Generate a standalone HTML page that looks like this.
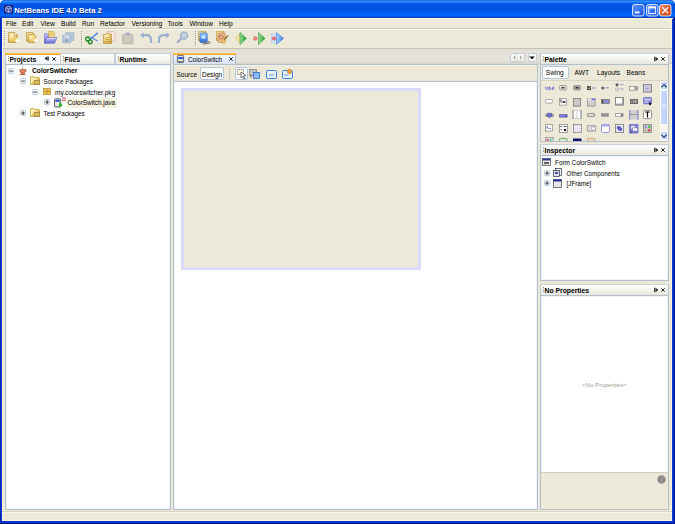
<!DOCTYPE html>
<html><head><meta charset="utf-8">
<style>
*{margin:0;padding:0;box-sizing:border-box}
html,body{width:675px;height:524px;overflow:hidden;background:#ece9d8;font-family:"Liberation Sans",sans-serif;color:#000}
.a{position:absolute}
.t{position:absolute;white-space:nowrap;font-size:6.5px;line-height:8px}
svg.a{overflow:visible}
</style></head><body>
<div class="a" style="left:0px;top:0px;width:675px;height:524px;background:#fff"></div>
<div class="a" style="left:0px;top:0px;width:675px;height:524px;background:#0838d0;border-left:1px solid #0a2ab0;border-right:1px solid #00138c;border-bottom:1px solid #00138c;border-radius:5px 5px 0 0"></div>
<div class="a" style="left:0px;top:0px;width:675px;height:18px;border-radius:5px 5px 0 0;background:linear-gradient(#2466e4 0px,#2a8eff 1.5px,#1a7af8 2.5px,#0457e6 4px,#0052e0 9px,#005cf4 12px,#0066fe 14px,#0062f8 16px,#0a40c4 17.5px,#1a3aa0 18px)"></div>
<svg class="a" style="left:4px;top:5px" width="9" height="8.5" viewBox="0 0 9 8.5"><rect x="0" y="0" width="9" height="8.5" rx="1" fill="#1a2470"/><circle cx="4.5" cy="4.3" r="3.1" fill="#3a48a8" stroke="#c0ccff" stroke-width="0.8"/><path d="M2.3 3 Q4.5 5 6.8 3.2 M4.5 4.3 Q3.8 6 4.8 7.2" stroke="#e0e8ff" stroke-width="0.7" fill="none"/></svg>
<div class="t" style="left:14.2px;top:5.5px;font-size:7.62px;font-weight:bold;color:#fff;line-height:9px;text-shadow:0.7px 0.7px 0 #0a2a8a">NetBeans IDE 4.0 Beta 2</div>
<svg width="0" height="0" style="position:absolute"><defs><linearGradient id="gb" x1="0" y1="0" x2="1" y2="1"><stop offset="0" stop-color="#6b9bff"/><stop offset="0.5" stop-color="#3a74f6"/><stop offset="1" stop-color="#1e4fd6"/></linearGradient><linearGradient id="gr" x1="0" y1="0" x2="1" y2="1"><stop offset="0" stop-color="#f09070"/><stop offset="0.5" stop-color="#e05a30"/><stop offset="1" stop-color="#c23c12"/></linearGradient></defs></svg>
<svg class="a" style="left:632px;top:3.5px" width="12.5" height="12.5" viewBox="0 0 12.5 12.5"><rect x="0.5" y="0.5" width="11.5" height="11.5" rx="2" fill="url(#gb)" stroke="#e8eeff" stroke-width="0.9"/><rect x="3" y="7.5" width="4.5" height="1.8" fill="#fff"/></svg>
<svg class="a" style="left:646px;top:3.5px" width="12.5" height="12.5" viewBox="0 0 12.5 12.5"><rect x="0.5" y="0.5" width="11.5" height="11.5" rx="2" fill="url(#gb)" stroke="#e8eeff" stroke-width="0.9"/><rect x="2.8" y="2.8" width="6.8" height="6.8" fill="none" stroke="#fff" stroke-width="0.9"/><rect x="2.8" y="2.8" width="6.8" height="1.6" fill="#fff"/></svg>
<svg class="a" style="left:659px;top:3.5px" width="12.5" height="12.5" viewBox="0 0 12.5 12.5"><rect x="0.5" y="0.5" width="11.5" height="11.5" rx="2" fill="url(#gr)" stroke="#e8eeff" stroke-width="0.9"/><path d="M3.3 3.3 L9.2 9.2 M9.2 3.3 L3.3 9.2" stroke="#fff" stroke-width="1.3"/></svg>
<div class="a" style="left:2px;top:18px;width:670px;height:503px;background:#ece9d8;border-left:1px solid #fbf6e4;border-right:1px solid #fbf3d8;border-bottom:1px solid #fdf6d9"></div>
<div class="a" style="left:2px;top:18px;width:671px;height:1px;background:#fdf6d9"></div>
<div class="t" style="left:6px;top:19.7px;font-size:6.6px;color:#000;line-height:8px;">File</div>
<div class="t" style="left:22px;top:19.7px;font-size:6.6px;color:#000;line-height:8px;">Edit</div>
<div class="t" style="left:40.5px;top:19.7px;font-size:6.6px;color:#000;line-height:8px;">View</div>
<div class="t" style="left:61px;top:19.7px;font-size:6.6px;color:#000;line-height:8px;">Build</div>
<div class="t" style="left:82px;top:19.7px;font-size:6.6px;color:#000;line-height:8px;">Run</div>
<div class="t" style="left:100px;top:19.7px;font-size:6.6px;color:#000;line-height:8px;">Refactor</div>
<div class="t" style="left:131.5px;top:19.7px;font-size:6.6px;color:#000;line-height:8px;">Versioning</div>
<div class="t" style="left:167.5px;top:19.7px;font-size:6.6px;color:#000;line-height:8px;">Tools</div>
<div class="t" style="left:189.5px;top:19.7px;font-size:6.6px;color:#000;line-height:8px;">Window</div>
<div class="t" style="left:219px;top:19.7px;font-size:6.6px;color:#000;line-height:8px;">Help</div>
<div class="a" style="left:3px;top:28px;width:669px;height:1px;background:#d3cfbd"></div>
<div class="a" style="left:3px;top:29px;width:669px;height:1px;background:#faf9f3"></div>
<div class="a" style="left:4px;top:31px;width:1px;height:16px;background:repeating-linear-gradient(#a29f90 0 1px,transparent 1px 2px)"></div>
<div class="a" style="left:5px;top:32px;width:1px;height:15px;background:repeating-linear-gradient(#fbfaf2 0 1px,transparent 1px 2px)"></div>
<svg width="0" height="0" style="position:absolute"><defs><radialGradient id="gold" cx="0.35" cy="0.3" r="0.85"><stop offset="0" stop-color="#fff6c8"/><stop offset="0.55" stop-color="#eccd70"/><stop offset="1" stop-color="#c4962c"/></radialGradient><linearGradient id="purp" x1="0" y1="0" x2="0" y2="1"><stop offset="0" stop-color="#c8c8ff"/><stop offset="1" stop-color="#6a6ad8"/></linearGradient><linearGradient id="blu" x1="0" y1="0" x2="0" y2="1"><stop offset="0" stop-color="#8ec4ff"/><stop offset="1" stop-color="#2a70d8"/></linearGradient><linearGradient id="grn" x1="0" y1="0" x2="1" y2="0"><stop offset="0" stop-color="#9ee09a"/><stop offset="1" stop-color="#1e9a2a"/></linearGradient><linearGradient id="blt" x1="0" y1="0" x2="1" y2="0"><stop offset="0" stop-color="#a8d0ff"/><stop offset="1" stop-color="#3a80e0"/></linearGradient></defs></svg>
<svg class="a" style="left:8px;top:32px" width="13" height="13" viewBox="0 0 13 13"><path d="M0.5 0.5 h6 l3 3 v7 h-9z" fill="url(#gold)" stroke="#b08a30" stroke-width="0.6"/><path d="M6.5 0.5 v3 h3" fill="#d8b050" stroke="#b08a30" stroke-width="0.5"/><circle cx="7.3" cy="2.4" r="0.8" fill="#fff"/><circle cx="9.3" cy="8.6" r="2.2" fill="#fffbe0" opacity="0.6"/><path d="M9.3 5.3999999999999995 Q9.876000000000001 8.024 12.5 8.6 Q9.876000000000001 9.176 9.3 11.8 Q8.724 9.176 6.1000000000000005 8.6 Q8.724 8.024 9.3 5.3999999999999995Z" fill="#fffdf0" stroke="#f0dc90" stroke-width="0.3"/></svg>
<svg class="a" style="left:26px;top:32px" width="12" height="12" viewBox="0 0 12 12"><path d="M0.5 0.5 h6 l1.5 1.5 v7 h-7.5z" fill="url(#gold)" stroke="#b08a30" stroke-width="0.6"/><path d="M2.5 2.5 h5.5 l2 2 v6 h-7.5z" fill="url(#gold)" stroke="#b08a30" stroke-width="0.6"/><circle cx="9.8" cy="8.6" r="2" fill="#fffbe0" opacity="0.6"/><path d="M9.8 5.6 Q10.34 8.059999999999999 12.8 8.6 Q10.34 9.14 9.8 11.6 Q9.260000000000002 9.14 6.800000000000001 8.6 Q9.260000000000002 8.059999999999999 9.8 5.6Z" fill="#fffdf0" stroke="#f0dc90" stroke-width="0.3"/></svg>
<svg class="a" style="left:44px;top:31px" width="14" height="13" viewBox="0 0 14 13"><path d="M4.5 0.5 h4.5 l1.5 1.5 v6 h-6z" fill="#f4dc80" stroke="#b89030" stroke-width="0.5"/><path d="M5.5 2.5 h3.5 M5.5 4 h3.5" stroke="#c8a040" stroke-width="0.5"/><path d="M0.5 2.5 h2.5 l1 1 v8.5 h-3.5z" fill="url(#purp)" stroke="#5050b8" stroke-width="0.5"/><path d="M2.5 6.5 h10.5 l-2.5 5.8 h-10z" fill="url(#purp)" stroke="#5050b8" stroke-width="0.5"/><path d="M3.5 7.5 h8" stroke="#e8e8ff" stroke-width="0.6"/></svg>
<svg class="a" style="left:62px;top:32px" width="13" height="11.5" viewBox="0 0 13 11.5"><path d="M3.5 0.5 h8.5 v8 h-8.5z" fill="#b4c4d8" stroke="#a0b2c8" stroke-width="0.5"/><path d="M0.5 3 h8.5 v8 h-8.5z" fill="#b4c4d8" stroke="#a0b2c8" stroke-width="0.5"/><rect x="2.3" y="3.2" width="5" height="3" fill="#d4dee8"/><rect x="3" y="7.5" width="3.5" height="3" fill="#98aac0"/><path d="M9.5 1.5 v2 M10.8 1.5 v2" stroke="#d4dee8" stroke-width="0.5"/></svg>
<div class="a" style="left:81px;top:31px;width:1px;height:16px;background:repeating-linear-gradient(#a29f90 0 1px,transparent 1px 2px)"></div>
<div class="a" style="left:82px;top:32px;width:1px;height:15px;background:repeating-linear-gradient(#fbfaf2 0 1px,transparent 1px 2px)"></div>
<svg class="a" style="left:84.5px;top:31.5px" width="13.5" height="12" viewBox="0 0 13.5 12"><path d="M5.5 7 L12.8 0.8" stroke="#5a8ae0" stroke-width="1.6"/><path d="M5.5 5 L12.5 9" stroke="#5a8ae0" stroke-width="1.3"/><circle cx="2.7" cy="7" r="2" fill="none" stroke="#1e8a2a" stroke-width="1.4"/><circle cx="5.2" cy="9.8" r="1.9" fill="none" stroke="#1e8a2a" stroke-width="1.4"/></svg>
<svg class="a" style="left:103px;top:31px" width="12.5" height="13" viewBox="0 0 12.5 13"><path d="M4.5 0.5 h5.5 l2 2 v7.5 h-7.5z" fill="#fbe8e0" stroke="#d8a090" stroke-width="0.5"/><path d="M6 2 h3" stroke="#d8a090" stroke-width="0.4"/><path d="M0.5 3.5 h2.5 l0.8 -1.2 h2 l0.8 1.2 h1.9 v9 h-8z" fill="url(#gold)" stroke="#a07820" stroke-width="0.5"/><path d="M2 6.5 h5 M2 8.5 h5 M2 10.5 h5" stroke="#b08828" stroke-width="0.6"/></svg>
<svg class="a" style="left:122px;top:31.5px" width="11.5" height="12.5" viewBox="0 0 11.5 12.5"><path d="M0.5 2.5 h3 l0.8 -1.5 h3 l0.8 1.5 h3 v9.5 h-10.6z" fill="#c8c6bc" stroke="#b0aea4" stroke-width="0.5"/><path d="M3.5 0.8 h4.5 v2 h-4.5z" fill="#a8a8d0"/><path d="M2.5 6 h6.5 M2.5 8 h6.5" stroke="#dad8d0" stroke-width="0.5"/></svg>
<svg class="a" style="left:140px;top:32px" width="12" height="11.5" viewBox="0 0 12 11.5"><path d="M1 3.2 H6.5 C10.5 3.2 11 6 11 8 V11" stroke="#9cb0d0" stroke-width="2.2" fill="none"/><path d="M0.2 3.2 L3.8 0.2 V6.2z" fill="#9cb0d0"/></svg>
<svg class="a" style="left:157.5px;top:32px" width="12" height="11.5" viewBox="0 0 12 11.5"><path d="M11 3.2 H5.5 C1.5 3.2 1 6 1 8 V11" stroke="#9cb0d0" stroke-width="2.2" fill="none"/><path d="M11.8 3.2 L8.2 0.2 V6.2z" fill="#9cb0d0"/></svg>
<svg class="a" style="left:176px;top:31px" width="12.5" height="13" viewBox="0 0 12.5 13"><circle cx="8" cy="4.6" r="3.6" fill="#c4cede" stroke="#9cacc8" stroke-width="1.2"/><path d="M5.5 7.3 L1.2 11.8" stroke="#9cacc8" stroke-width="2"/></svg>
<div class="a" style="left:194.5px;top:31px;width:1px;height:16px;background:repeating-linear-gradient(#a29f90 0 1px,transparent 1px 2px)"></div>
<div class="a" style="left:195.5px;top:32px;width:1px;height:15px;background:repeating-linear-gradient(#fbfaf2 0 1px,transparent 1px 2px)"></div>
<svg class="a" style="left:198px;top:31px" width="13" height="13.5" viewBox="0 0 13 13.5"><path d="M0.5 0.5 h7.5 v9 h-7.5z" fill="url(#gold)" stroke="#b08a30" stroke-width="0.5"/><rect x="1.8" y="2" width="7.5" height="9.5" rx="1" fill="url(#blu)" stroke="#2a5ab8" stroke-width="0.5"/><path d="M3.5 4.5 h4 v3 h-4z" fill="#d0e6ff"/><path d="M5.5 11.5 L12 10.5 M6 13 L12.5 12" stroke="#707070" stroke-width="1"/><circle cx="5.5" cy="12" r="1.2" fill="none" stroke="#707070" stroke-width="0.7"/></svg>
<svg class="a" style="left:216px;top:31px" width="12.5" height="13.5" viewBox="0 0 12.5 13.5"><path d="M0.5 0.5 h7.5 v9 h-7.5z" fill="url(#gold)" stroke="#b08a30" stroke-width="0.5"/><rect x="1.8" y="2" width="7.5" height="9.5" rx="1" fill="#eab890" stroke="#b87040" stroke-width="0.5"/><circle cx="5.2" cy="6" r="2" fill="none" stroke="#a86040" stroke-width="0.8"/><path d="M8 9 L12 4.5" stroke="#8a6a2a" stroke-width="1.2"/><path d="M5.5 9.5 l2.5 -1 l1.5 1.5 l-1.5 3 z" fill="#f0d070" stroke="#b08a30" stroke-width="0.4"/></svg>
<svg class="a" style="left:235px;top:31.5px" width="12" height="13" viewBox="0 0 12 13"><path d="M0.3 6.5 L5 1.5 V11.5z" fill="#f4e4a0" stroke="#c8b060" stroke-width="0.4"/><path d="M5 0.5 L11.5 6.5 L5 12.5z" fill="url(#grn)" stroke="#1a8a22" stroke-width="0.5"/></svg>
<svg class="a" style="left:252.5px;top:31.5px" width="12.5" height="13" viewBox="0 0 12.5 13"><circle cx="2.3" cy="6.5" r="1.8" fill="#f07070" stroke="#d04040" stroke-width="0.4"/><path d="M1.5 6.5 h1.6" stroke="#fff" stroke-width="0.5"/><path d="M5.5 0.5 L12 6.5 L5.5 12.5z" fill="url(#grn)" stroke="#1a8a22" stroke-width="0.5"/></svg>
<svg class="a" style="left:270.5px;top:31.5px" width="13" height="13" viewBox="0 0 13 13"><rect x="0.5" y="2" width="5" height="9" fill="#d0e4ff" stroke="#6a9ae0" stroke-width="0.5" stroke-dasharray="1 0.8"/><circle cx="3" cy="6.5" r="1.8" fill="#f07070" stroke="#d04040" stroke-width="0.4"/><path d="M5.5 0.5 L12.5 6.5 L5.5 12.5z" fill="url(#blt)" stroke="#2a6ad0" stroke-width="0.5"/></svg>
<div class="a" style="left:3px;top:48px;width:669px;height:1px;background:#c7c3b2"></div>
<div class="a" style="left:3px;top:49px;width:669px;height:15px;background:linear-gradient(#dedcd2 0px,#e3e1da 1.5px,#e4e2da 12px,#d8d7ce 14px,#d8d7ce 15px)"></div>
<div class="a" style="left:5px;top:53px;width:56px;height:11px;border-left:1px solid #c4ccd6;border-right:1px solid #c4ccd6;background:linear-gradient(#ffffff,#fafbfd 50%,#eef2f8)"></div><div class="a" style="left:5px;top:53px;width:56px;height:2px;background:linear-gradient(#ffcf55,#f39b1d);border-radius:1px 1px 0 0"></div>
<div class="a" style="left:7.5px;top:56px;width:1px;height:6px;background:repeating-linear-gradient(#8a8a8a 0 1px,transparent 1px 2px)"></div>
<div class="t" style="left:9.5px;top:55.7px;font-size:6.8px;font-weight:bold;color:#000;">Projects</div>
<svg class="a" style="left:44px;top:56px" width="5" height="5" viewBox="0 0 5 5"><path d="M4.3 0.5 V4.5" stroke="#404040" stroke-width="1.1"/><path d="M3.5 0.3 L0.5 2.5 L3.5 4.7 Z" fill="#1a1a1a"/></svg>
<svg class="a" style="left:52px;top:57px" width="4" height="4" viewBox="0 0 4 4"><path d="M0.3 0.3 L3.7 3.7 M3.7 0.3 L0.3 3.7" stroke="#181818" stroke-width="0.95"/></svg>
<div class="a" style="left:60px;top:52.5px;width:55px;height:11.5px;border:1px solid #c6ccd4;border-bottom:none;background:linear-gradient(#fdfdfb,#f5f4ef 60%,#e9e7df)"></div>
<div class="a" style="left:62.5px;top:56px;width:1px;height:6px;background:repeating-linear-gradient(#8a8a8a 0 1px,transparent 1px 2px)"></div>
<div class="t" style="left:64.5px;top:56px;font-size:6.8px;font-weight:bold;color:#000;">Files</div>
<div class="a" style="left:115px;top:52.5px;width:56px;height:11.5px;border:1px solid #c6ccd4;border-bottom:none;background:linear-gradient(#fdfdfb,#f5f4ef 60%,#e9e7df)"></div>
<div class="a" style="left:117.5px;top:56px;width:1px;height:6px;background:repeating-linear-gradient(#8a8a8a 0 1px,transparent 1px 2px)"></div>
<div class="t" style="left:119.5px;top:56px;font-size:6.8px;font-weight:bold;color:#000;">Runtime</div>
<div class="a" style="left:5px;top:64px;width:166px;height:446px;background:#fff;border:1px solid #b2bfcd;box-shadow:inset 0 0 0 1px #f0f4fa"></div>
<svg class="a" style="left:8px;top:67.5px" width="6.5" height="6.5" viewBox="0 0 6.5 6.5"><rect x="0.5" y="0.5" width="5.2" height="5.2" rx="1.2" fill="#fbfcfe" stroke="#a4bcd8" stroke-width="0.8"/><path d="M1.4 3.1 H4.8" stroke="#1c1c1c" stroke-width="0.9"/><path d="M1.4 4.1 H4.8" stroke="#c8c8c0" stroke-width="0.6"/></svg>
<svg class="a" style="left:19px;top:66px" width="8" height="9" viewBox="0 0 8 9"><path d="M3.5 0.3 q1.2 1 0 1.8 q-1.2 0.9 0 1.8" stroke="#a0a0a0" stroke-width="0.8" fill="none"/><path d="M0.8 3.6 h6 q0.2 3.5 -3 4.3 q-3.2 -0.8 -3 -4.3z" fill="#d8704e" stroke="#9a4a30" stroke-width="0.5"/><path d="M6.6 4.2 q1.2 0.4 0.3 1.6" stroke="#9a4a30" stroke-width="0.6" fill="none"/><path d="M2 4.8 q1.5 0.8 3.5 0" stroke="#f8d0c0" stroke-width="0.6" fill="none"/><ellipse cx="3.8" cy="8.2" rx="3.4" ry="0.7" fill="#b86040"/></svg>
<div class="t" style="left:32px;top:67px;font-size:6.7px;font-weight:bold;color:#000;">ColorSwitcher</div>
<svg class="a" style="left:20px;top:78.0px" width="6.5" height="6.5" viewBox="0 0 6.5 6.5"><rect x="0.5" y="0.5" width="5.2" height="5.2" rx="1.2" fill="#fbfcfe" stroke="#a4bcd8" stroke-width="0.8"/><path d="M1.4 3.1 H4.8" stroke="#1c1c1c" stroke-width="0.9"/><path d="M1.4 4.1 H4.8" stroke="#c8c8c0" stroke-width="0.6"/></svg>
<svg class="a" style="left:30px;top:76px" width="10" height="9" viewBox="0 0 10 9"><path d="M0.5 1.2 q0 -0.7 0.7 -0.7 h2.6 l1 1 h4 q0.7 0 0.7 0.7 v6.3 h-9z" fill="url(#gold)" stroke="#b8901c" stroke-width="0.6"/><path d="M1.5 3 v4.5" stroke="#fff8c0" stroke-width="1.2"/><rect x="4.6" y="4.3" width="4.9" height="4.3" fill="#c8a848" stroke="#8a6a20" stroke-width="0.5"/><path d="M7.05 4.3 V8.6 M4.6 6.45 H9.5" stroke="#f0e0a0" stroke-width="0.5"/></svg>
<div class="t" style="left:43.5px;top:77.5px;font-size:6.3px;color:#000;">Source Packages</div>
<svg class="a" style="left:31.5px;top:88.5px" width="6.5" height="6.5" viewBox="0 0 6.5 6.5"><rect x="0.5" y="0.5" width="5.2" height="5.2" rx="1.2" fill="#fbfcfe" stroke="#a4bcd8" stroke-width="0.8"/><path d="M1.4 3.1 H4.8" stroke="#1c1c1c" stroke-width="0.9"/><path d="M1.4 4.1 H4.8" stroke="#c8c8c0" stroke-width="0.6"/></svg>
<svg class="a" style="left:42.5px;top:88px" width="8" height="7" viewBox="0 0 8 7"><rect x="0.5" y="0.5" width="7" height="6" fill="#e8c050" stroke="#a8801c" stroke-width="0.6"/><path d="M4 0.5 V6.5 M0.5 3.5 H7.5" stroke="#a8801c" stroke-width="0.5"/></svg>
<div class="t" style="left:55px;top:88.5px;font-size:6.55px;color:#000;">my.colorswitcher.pkg</div>
<svg class="a" style="left:43.5px;top:99.0px" width="6.5" height="6.5" viewBox="0 0 6.5 6.5"><rect x="0.5" y="0.5" width="5.2" height="5.2" rx="1.2" fill="#fbfcfe" stroke="#a4bcd8" stroke-width="0.8"/><path d="M1.4 3.1 H4.8" stroke="#1c1c1c" stroke-width="0.9"/><path d="M1.4 4.1 H4.8" stroke="#c8c8c0" stroke-width="0.6"/><path d="M3.1 1.4 V4.8" stroke="#1c1c1c" stroke-width="0.9"/></svg>
<svg class="a" style="left:54px;top:97px" width="13" height="11" viewBox="0 0 13 11"><rect x="0.5" y="1.8" width="6.2" height="8.2" rx="0.8" fill="#d8d8d8" stroke="#4a4a4a" stroke-width="0.8"/><rect x="1.4" y="2.8" width="4.4" height="2" fill="#2a5ad8"/><rect x="1.4" y="5.2" width="4.4" height="2.5" fill="#f4f0e0"/><path d="M5.2 5.2 L8.6 8 L5.2 10.8z" fill="#18b418"/><path d="M8 1 h4 M8 3.2 h4" stroke="#d03040" stroke-width="0.9"/><path d="M8.3 2.1 h3.4" stroke="#f0a0a8" stroke-width="0.5"/></svg>
<div class="a" style="left:66px;top:97.5px;width:51px;height:10px;background:#f6f2dd"></div>
<div class="t" style="left:67.5px;top:99px;font-size:6.4px;color:#000;">ColorSwitch.java</div>
<svg class="a" style="left:20px;top:110.0px" width="6.5" height="6.5" viewBox="0 0 6.5 6.5"><rect x="0.5" y="0.5" width="5.2" height="5.2" rx="1.2" fill="#fbfcfe" stroke="#a4bcd8" stroke-width="0.8"/><path d="M1.4 3.1 H4.8" stroke="#1c1c1c" stroke-width="0.9"/><path d="M1.4 4.1 H4.8" stroke="#c8c8c0" stroke-width="0.6"/><path d="M3.1 1.4 V4.8" stroke="#1c1c1c" stroke-width="0.9"/></svg>
<svg class="a" style="left:30px;top:108px" width="10" height="9" viewBox="0 0 10 9"><path d="M0.5 1.2 q0 -0.7 0.7 -0.7 h2.6 l1 1 h4 q0.7 0 0.7 0.7 v6.3 h-9z" fill="url(#gold)" stroke="#b8901c" stroke-width="0.6"/><path d="M1.5 3 v4.5" stroke="#fff8c0" stroke-width="1.2"/><rect x="4.6" y="4.3" width="4.9" height="4.3" fill="#c8a848" stroke="#8a6a20" stroke-width="0.5"/><path d="M7.05 4.3 V8.6 M4.6 6.45 H9.5" stroke="#f0e0a0" stroke-width="0.5"/></svg>
<div class="t" style="left:43.5px;top:109.5px;font-size:6.35px;color:#000;">Test Packages</div>
<div class="a" style="left:173px;top:53px;width:63px;height:11px;border-left:1px solid #a9b9cf;border-right:1px solid #a9b9cf;background:linear-gradient(#f6f8fd,#e8eef9 50%,#d8e2f4)"></div><div class="a" style="left:173px;top:53px;width:63px;height:2px;background:linear-gradient(#ffcf55,#f39b1d);border-radius:1px 1px 0 0"></div>
<svg class="a" style="left:177px;top:55px" width="7" height="8" viewBox="0 0 7 8"><rect x="0.4" y="0.4" width="6.2" height="7.2" rx="0.8" fill="#e8e8ec" stroke="#40444c" stroke-width="0.8"/><rect x="1.3" y="2" width="4.6" height="2.2" fill="#2a56e0"/><rect x="1.3" y="4.4" width="4.4" height="1.8" fill="#f0ead0"/><rect x="1.3" y="6.2" width="4.4" height="0.9" fill="#505460"/></svg>
<div class="t" style="left:188px;top:56px;font-size:6.4px;color:#000;">ColorSwitch</div>
<svg class="a" style="left:229px;top:57px" width="4" height="4" viewBox="0 0 4 4"><path d="M0.3 0.3 L3.7 3.7 M3.7 0.3 L0.3 3.7" stroke="#181818" stroke-width="0.95"/></svg>
<div class="a" style="left:173px;top:64px;width:365px;height:446px;background:#fff;border:1px solid #b2bfcd;box-shadow:inset 0 0 0 1px #f0f4fa"></div>
<div class="a" style="left:174px;top:65px;width:363px;height:17px;background:linear-gradient(#f6f3e4 0px,#ece9d8 1.5px,#ece9d8 14px,#e4e1d4 16px);border-bottom:1px solid #b6c4d2"></div>
<div class="t" style="left:176.5px;top:71px;font-size:6.5px;color:#000;">Source</div>
<div class="a" style="left:200px;top:67px;width:24px;height:13px;background:#fff;border:1px solid #b4c6dc;border-radius:2px"></div>
<div class="t" style="left:202px;top:71px;font-size:6.5px;color:#000;">Design</div>
<div class="a" style="left:229px;top:68px;width:1px;height:11px;background:#d2cebe"></div>
<div class="a" style="left:235px;top:67px;width:13px;height:13px;background:#fff;border:1px solid #b4c6dc;border-radius:2px"></div>
<svg class="a" style="left:237px;top:69px" width="10" height="10" viewBox="0 0 10 10"><rect x="0.5" y="0.5" width="6" height="5" fill="#fbf6d8" stroke="#404040" stroke-width="0.6" stroke-dasharray="1 0.6"/><path d="M4 3 L9 6.5 L6.5 7 L8 9.5 L7 10 L5.5 7.5 L4 9z" fill="#fff" stroke="#202020" stroke-width="0.6"/></svg>
<svg class="a" style="left:249px;top:69px" width="11" height="10" viewBox="0 0 11 10"><rect x="0.5" y="0.5" width="7" height="6" fill="#c0c0c0" stroke="#707070" stroke-width="0.6"/><path d="M2 6 V9" stroke="#505050" stroke-width="0.8"/><rect x="4.5" y="3.5" width="6" height="6" fill="#8ab8f0" stroke="#2a6ad0" stroke-width="0.8"/></svg>
<svg class="a" style="left:265.5px;top:69.5px" width="11" height="9" viewBox="0 0 11 9"><rect x="0.5" y="0.5" width="10" height="8" rx="1" fill="#e8f0fc" stroke="#3a80e0" stroke-width="1"/><path d="M3 5 h5" stroke="#3a80e0" stroke-width="0.8"/></svg>
<svg class="a" style="left:281.5px;top:69px" width="11" height="10" viewBox="0 0 11 10"><rect x="0.5" y="1.5" width="10" height="8" rx="1" fill="#e8f0fc" stroke="#3a80e0" stroke-width="1"/><path d="M2.5 6 h4" stroke="#3a80e0" stroke-width="0.8"/><circle cx="7.5" cy="2.5" r="2.2" fill="#f0a030" stroke="#c07010" stroke-width="0.5"/></svg>
<div class="a" style="left:181px;top:88px;width:240px;height:182px;background:#ece9d8;border:3px solid #dadafc"></div>
<div class="a" style="left:509.5px;top:52.5px;width:15.5px;height:9px;border:1px solid #c2cbd6;border-radius:2px;background:linear-gradient(#fbfbf8,#f0efe8)"></div>
<div class="a" style="left:517px;top:53.5px;width:1px;height:7px;background:#e2e0d8"></div>
<svg class="a" style="left:511px;top:53.5px" width="13" height="7" viewBox="0 0 13 7"><path d="M4.3 1.3 L2.3 3.5 L4.3 5.7z" fill="#a8a89a"/><path d="M9 1.3 L11 3.5 L9 5.7z" fill="#a8a89a"/></svg>
<div class="a" style="left:527.5px;top:52.5px;width:9px;height:9px;border:1px solid #c2cbd6;border-radius:2px;background:linear-gradient(#ffffff,#f6f6f2)"></div>
<svg class="a" style="left:529px;top:55.5px" width="6" height="4" viewBox="0 0 6 4"><path d="M0.2 0.5 H5.8 L3 3.3 Z" fill="#000"/></svg>
<div class="a" style="left:540px;top:53px;width:129px;height:11px;border:1px solid #b9c3cf;border-top-color:#c9d0d8;border-bottom:none;background:linear-gradient(#ffffff,#f3f2ed 55%,#e7e5dc)"></div><div class="a" style="left:542.5px;top:56px;width:1px;height:6px;background:repeating-linear-gradient(#8a8a8a 0 1px,transparent 1px 2px)"></div><div class="t" style="left:544.5px;top:56px;font-size:6.8px;font-weight:bold;color:#000;">Palette</div><svg class="a" style="left:653.5px;top:56px" width="5" height="6" viewBox="0 0 5 6"><path d="M0.7 0.8 V5.2" stroke="#303030" stroke-width="1.1"/><path d="M1.5 0.8 L4.3 3 L1.5 5.2 Z" fill="#202020"/></svg><svg class="a" style="left:661px;top:57px" width="4" height="4" viewBox="0 0 4 4"><path d="M0.3 0.3 L3.7 3.7 M3.7 0.3 L0.3 3.7" stroke="#181818" stroke-width="0.95"/></svg>
<div class="a" style="left:540px;top:64px;width:129px;height:78px;background:#ece9d8;border:1px solid #b2bfcd"></div>
<div class="a" style="left:542px;top:66px;width:26.5px;height:12.7px;background:#fff;border:1px solid #b4c6dc;border-radius:2px"></div>
<div class="t" style="left:545.8px;top:69px;font-size:6.6px;color:#000;">Swing</div>
<div class="t" style="left:574.5px;top:69px;font-size:6.6px;color:#000;">AWT</div>
<div class="t" style="left:597px;top:69px;font-size:6.6px;color:#000;">Layouts</div>
<div class="t" style="left:626.5px;top:69px;font-size:6.6px;color:#000;">Beans</div>
<div class="a" style="left:541px;top:80px;width:127px;height:1px;background:#d8d4c4"></div>
<div class="a" style="left:659.5px;top:80.5px;width:8px;height:60px;background:#f6f5f0"></div>
<div class="a" style="left:659.5px;top:80.5px;width:8px;height:9.5px;background:linear-gradient(90deg,#d4e0fc,#b8cbf6);border:0.5px solid #fff;border-radius:1.5px"></div>
<svg class="a" style="left:660px;top:82.5px" width="8" height="6" viewBox="0 0 8 6"><path d="M1.3 4.3 L4 1.6 L6.7 4.3" stroke="#303a68" stroke-width="1.1" fill="none"/></svg>
<div class="a" style="left:659.5px;top:90px;width:8px;height:35px;background:linear-gradient(90deg,#cad9fb,#bccff8);border:0.5px solid #fff;border-radius:1.5px"></div>
<svg class="a" style="left:661.5px;top:104px" width="4" height="6" viewBox="0 0 4 6"><path d="M0 0.5 H4 M0 2.5 H4 M0 4.5 H4" stroke="#e8eeff" stroke-width="0.8"/></svg>
<div class="a" style="left:659.5px;top:131px;width:8px;height:9px;background:linear-gradient(90deg,#d4e0fc,#b8cbf6);border:0.5px solid #fff;border-radius:1.5px"></div>
<svg class="a" style="left:660px;top:132.5px" width="8" height="6" viewBox="0 0 8 6"><path d="M1.3 1.7 L4 4.4 L6.7 1.7" stroke="#303a68" stroke-width="1.1" fill="none"/></svg>
<div class="a" style="left:541px;top:81px;width:118px;height:60px;overflow:hidden;background:transparent"><svg class="a" style="left:calc(-541px + 545px);top:calc(-81px + 85.5px)" width="9" height="4" viewBox="0 0 9 4"><path d="M0.5 0.3 V3.5 M2 1.5 h1.3 v2 h-1.3z M4.3 0.3 V3.5 h1.3 v-2 h-1.3 M6.5 2.5 h1.5 M7 1.5 h1 v2 h-1 M8.7 0.3 V3.5" stroke="#5050c8" stroke-width="0.55" fill="none"/></svg><svg class="a" style="left:calc(-541px + 559px);top:calc(-81px + 85px)" width="8" height="5.5" viewBox="0 0 8 5.5"><rect x="0.5" y="0.5" width="7" height="4.5" rx="1.2" fill="#dcdcd4" stroke="#8a8a8a" stroke-width="0.7"/><rect x="2.5" y="2" width="3" height="1.5" fill="#404040"/></svg><svg class="a" style="left:calc(-541px + 573px);top:calc(-81px + 85px)" width="8" height="5.5" viewBox="0 0 8 5.5"><rect x="0.5" y="0.5" width="7" height="4.5" rx="1" fill="#a8a8a8" stroke="#888" stroke-width="0.7"/><rect x="2.5" y="2" width="3" height="1.5" fill="#303030"/></svg><svg class="a" style="left:calc(-541px + 586.5px);top:calc(-81px + 85.5px)" width="9" height="4.5" viewBox="0 0 9 4.5"><rect x="0.3" y="0.3" width="3.5" height="3.5" fill="#505050" stroke="#303030" stroke-width="0.5"/><path d="M1 2 L2 3 L3.5 0.8" stroke="#fff" stroke-width="0.5" fill="none"/><path d="M5 2 H8.5" stroke="#6a6ac8" stroke-width="0.8"/></svg><svg class="a" style="left:calc(-541px + 601px);top:calc(-81px + 85.5px)" width="8" height="4" viewBox="0 0 8 4"><circle cx="1.8" cy="2" r="1.5" fill="#606060"/><path d="M4.5 1.8 H8" stroke="#6a6ac8" stroke-width="0.8"/></svg><svg class="a" style="left:calc(-541px + 614.5px);top:calc(-81px + 83px)" width="9" height="8" viewBox="0 0 9 8"><circle cx="2" cy="1.8" r="1.5" fill="#606060"/><circle cx="2" cy="6.2" r="1.5" fill="#e8e8e8" stroke="#808080" stroke-width="0.5"/><path d="M5 1.6 H8.5 M5 6 H8.5" stroke="#8a8ad0" stroke-width="0.8"/></svg><svg class="a" style="left:calc(-541px + 628.5px);top:calc(-81px + 85.5px)" width="9" height="4.5" viewBox="0 0 9 4.5"><rect x="0.3" y="0.3" width="8.4" height="3.9" fill="#b8b8b8" stroke="#7a7a7a" stroke-width="0.5"/><rect x="1" y="1" width="4" height="2.5" fill="#fff"/><path d="M6 1.5 L7.2 2.8 L8 1.5" stroke="#404040" stroke-width="0.5" fill="none"/></svg><svg class="a" style="left:calc(-541px + 643px);top:calc(-81px + 83.5px)" width="9" height="8.5" viewBox="0 0 9 8.5"><rect x="0.4" y="0.4" width="8.2" height="7.7" fill="#c0c0c8" stroke="#707070" stroke-width="0.7"/><rect x="1.5" y="1.5" width="5" height="5.5" fill="#e8e8f4"/><path d="M2 2.8 H6 M2 4.4 H6 M2 6 H6" stroke="#8080d0" stroke-width="0.7"/></svg><svg class="a" style="left:calc(-541px + 545px);top:calc(-81px + 99px)" width="8" height="4.5" viewBox="0 0 8 4.5"><rect x="0.4" y="0.4" width="7.2" height="3.7" rx="1.5" fill="#fff" stroke="#8a8a8a" stroke-width="0.7"/></svg><svg class="a" style="left:calc(-541px + 559px);top:calc(-81px + 97.5px)" width="8" height="7.5" viewBox="0 0 8 7.5"><rect x="0.4" y="0.4" width="7.2" height="6.7" fill="#fff" stroke="#8a8a8a" stroke-width="0.7"/><path d="M2 1.8 V5 M1 2.5 L2 1.5 L3 2.5" stroke="#202020" stroke-width="0.7" fill="none"/><rect x="3.5" y="3" width="3" height="2" fill="#505050"/></svg><svg class="a" style="left:calc(-541px + 573px);top:calc(-81px + 97.5px)" width="8" height="8.5" viewBox="0 0 8 8.5"><rect x="0.4" y="0.4" width="7.2" height="7.7" fill="#c8c8c8" stroke="#7c7c7c" stroke-width="0.8"/></svg><svg class="a" style="left:calc(-541px + 587px);top:calc(-81px + 97.5px)" width="8.5" height="8.5" viewBox="0 0 8.5 8.5"><rect x="0.4" y="0.4" width="7.7" height="7.7" fill="#d0d0d0" stroke="#7c7c7c" stroke-width="0.7"/><rect x="0.4" y="0.4" width="7.7" height="2" fill="#e8e8e8"/><rect x="4.5" y="0.4" width="3.6" height="1.8" fill="#7878d8"/></svg><svg class="a" style="left:calc(-541px + 601px);top:calc(-81px + 99px)" width="9" height="5" viewBox="0 0 9 5"><rect x="0.3" y="0.3" width="8.4" height="4.4" fill="#909090" stroke="#606060" stroke-width="0.5"/><rect x="2.5" y="1" width="5" height="3" fill="#9090e0"/><rect x="1" y="1.5" width="1.2" height="2" fill="#202020"/></svg><svg class="a" style="left:calc(-541px + 615px);top:calc(-81px + 97px)" width="9" height="8.5" viewBox="0 0 9 8.5"><rect x="0.4" y="0.4" width="8.2" height="7.7" fill="#a8a8a8" stroke="#707070" stroke-width="0.7"/><rect x="1" y="1" width="6" height="5.5" fill="#fff"/></svg><svg class="a" style="left:calc(-541px + 630px);top:calc(-81px + 99px)" width="8" height="5" viewBox="0 0 8 5"><rect x="0" y="0" width="8" height="5" fill="#686868"/><path d="M1 4 L2 1 H3 M2.5 2.5 H1.8 M4 1 L3.5 4 M5 1 L6.5 4 M6.5 1 L5 4" stroke="#fff" stroke-width="0.5"/></svg><svg class="a" style="left:calc(-541px + 643px);top:calc(-81px + 97px)" width="9" height="8.5" viewBox="0 0 9 8.5"><rect x="0.4" y="0.4" width="8.2" height="6.5" rx="1" fill="#8a8ae0" stroke="#6060b8" stroke-width="0.6"/><rect x="1.5" y="2" width="6" height="1.3" fill="#e0e0f8"/><rect x="1.5" y="4.5" width="4" height="1.5" fill="#c0c0f0"/><path d="M6 5 L8.8 7 L7.5 7.3 L8 8.3 L7.3 8.5 L6.8 7.5 L6 8.3z" fill="#000"/></svg><svg class="a" style="left:calc(-541px + 545px);top:calc(-81px + 112.5px)" width="9" height="5.5" viewBox="0 0 9 5.5"><rect x="0.3" y="0.8" width="8.4" height="3" fill="#909090"/><path d="M2.5 0.3 H6.5 V3 L4.5 5 L2.5 3Z" fill="#7070d0" stroke="#404090" stroke-width="0.5"/></svg><svg class="a" style="left:calc(-541px + 559px);top:calc(-81px + 113.5px)" width="8.5" height="3.5" viewBox="0 0 8.5 3.5"><rect x="0.2" y="0.2" width="8.1" height="3.1" fill="#5a5ac0" stroke="#808080" stroke-width="0.4"/><rect x="1" y="1" width="5" height="1.5" fill="#8a8ae8"/></svg><svg class="a" style="left:calc(-541px + 572px);top:calc(-81px + 110px)" width="10" height="9" viewBox="0 0 10 9"><rect x="0.3" y="0.3" width="9.4" height="8.4" fill="#fff" stroke="#a0a0a0" stroke-width="0.5"/><rect x="0" y="0" width="1.8" height="9" fill="#b0b0b0"/><rect x="8.2" y="0" width="1.8" height="9" fill="#b0b0b0"/><path d="M5 1 V8" stroke="#c8c8c8" stroke-width="0.8"/></svg><svg class="a" style="left:calc(-541px + 587px);top:calc(-81px + 113px)" width="8" height="4" viewBox="0 0 8 4"><rect x="0.3" y="0.3" width="7.4" height="3.4" rx="1" fill="#9a9a9a" stroke="#888" stroke-width="0.5"/><rect x="1.5" y="1.2" width="5" height="1.6" fill="#f0f0f0"/></svg><svg class="a" style="left:calc(-541px + 601px);top:calc(-81px + 113px)" width="8" height="4" viewBox="0 0 8 4"><rect x="0.3" y="0.3" width="7.4" height="3.4" fill="#c4c4c4" stroke="#888" stroke-width="0.5"/><path d="M1.5 1 V3 M3.2 1 V3 M4.9 1 V3 M6.6 1 V3" stroke="#404040" stroke-width="0.6"/></svg><svg class="a" style="left:calc(-541px + 614.5px);top:calc(-81px + 113px)" width="8.5" height="4" viewBox="0 0 8.5 4"><rect x="0.3" y="0.3" width="7.9" height="3.4" fill="#bcbcbc" stroke="#888" stroke-width="0.5"/><rect x="1" y="1" width="4.5" height="2" fill="#fff"/><rect x="6" y="1" width="1.5" height="2" fill="#707070"/></svg><svg class="a" style="left:calc(-541px + 628.5px);top:calc(-81px + 110px)" width="9.5" height="9.5" viewBox="0 0 9.5 9.5"><rect x="0" y="0" width="9.5" height="9.5" fill="#d0d0d0"/><rect x="0" y="0" width="1.3" height="9.5" fill="#9090c8"/><rect x="8.2" y="0" width="1.3" height="9.5" fill="#9090c8"/><path d="M1 4.5 H8.5" stroke="#808080" stroke-width="0.7"/></svg><svg class="a" style="left:calc(-541px + 643px);top:calc(-81px + 110px)" width="9" height="9" viewBox="0 0 9 9"><rect x="0.4" y="0.4" width="8.2" height="8.2" rx="1" fill="#fff" stroke="#7a7a7a" stroke-width="0.8"/><path d="M2.2 2 H6.8 M4.5 2 V7.5" stroke="#000" stroke-width="1.2"/></svg><svg class="a" style="left:calc(-541px + 545px);top:calc(-81px + 124px)" width="8" height="7.5" viewBox="0 0 8 7.5"><rect x="0.4" y="0.4" width="7.2" height="6.7" fill="#f8f8f8" stroke="#8a8a8a" stroke-width="0.7"/><path d="M2.2 2 V5 M1.5 3.5 H3 M3.5 4.5 H6" stroke="#5050c0" stroke-width="0.6"/></svg><svg class="a" style="left:calc(-541px + 558.5px);top:calc(-81px + 123.5px)" width="9" height="9" viewBox="0 0 9 9"><rect x="0.4" y="0.4" width="8.2" height="8.2" fill="#fff" stroke="#7a7a7a" stroke-width="0.7"/><path d="M1.5 2.5 H3 M4.5 2.5 H7.5 M1.5 5.5 H3" stroke="#404060" stroke-width="0.9"/><circle cx="6" cy="6" r="1.3" fill="#202020"/></svg><svg class="a" style="left:calc(-541px + 572.5px);top:calc(-81px + 123.5px)" width="9" height="9" viewBox="0 0 9 9"><rect x="0.4" y="0.4" width="8.2" height="8.2" fill="#d8d8e8" stroke="#7a7a7a" stroke-width="0.7"/><path d="M3.2 0.5 V8.5 M5.8 0.5 V8.5 M0.5 3.2 H8.5 M0.5 5.8 H8.5" stroke="#fff" stroke-width="0.6"/></svg><svg class="a" style="left:calc(-541px + 587px);top:calc(-81px + 125px)" width="9" height="6.5" viewBox="0 0 9 6.5"><rect x="0.3" y="0.3" width="8.4" height="5.9" fill="#bdbdbd" stroke="#8a8a8a" stroke-width="0.5"/><rect x="1.2" y="1.2" width="3" height="4" fill="#e0e0e0"/><rect x="5" y="2.5" width="3" height="2" fill="#fff"/></svg><svg class="a" style="left:calc(-541px + 601px);top:calc(-81px + 123.5px)" width="9" height="9" viewBox="0 0 9 9"><rect x="0.5" y="0.5" width="8" height="8" rx="1.2" fill="#fff" stroke="#8888d8" stroke-width="0.9"/><rect x="0.5" y="0.5" width="8" height="2" fill="#a8a8e8"/></svg><svg class="a" style="left:calc(-541px + 615px);top:calc(-81px + 123.5px)" width="9" height="9" viewBox="0 0 9 9"><rect x="0.4" y="0.4" width="8.2" height="8.2" fill="#e8e8f0" stroke="#7a7a7a" stroke-width="0.8"/><ellipse cx="4.5" cy="4.5" rx="3" ry="2" transform="rotate(40 4.5 4.5)" fill="#5a5ac8"/></svg><svg class="a" style="left:calc(-541px + 628.5px);top:calc(-81px + 123.5px)" width="9.5" height="9.5" viewBox="0 0 9.5 9.5"><rect x="0" y="0" width="9.5" height="9.5" fill="#8080d8"/><rect x="1.5" y="1.5" width="5" height="3.5" fill="#e0e0f8" stroke="#505090" stroke-width="0.4"/><rect x="3.5" y="4" width="5" height="3" fill="#fff" stroke="#505090" stroke-width="0.4"/><rect x="1" y="7.5" width="2" height="1.2" fill="#404040"/></svg><svg class="a" style="left:calc(-541px + 643px);top:calc(-81px + 123.5px)" width="9" height="9" viewBox="0 0 9 9"><rect x="0.4" y="0.4" width="8.2" height="8.2" fill="#c8c8c8" stroke="#7a7a7a" stroke-width="0.7"/><circle cx="2.8" cy="2.8" r="1.2" fill="#8a8ae0"/><circle cx="6.2" cy="2.8" r="1.2" fill="#40b040"/><path d="M1.5 7.2 L2.8 5 L4 7.2z" fill="#e8a020"/><circle cx="6.2" cy="6.2" r="1.2" fill="#e04040"/></svg><svg class="a" style="left:calc(-541px + 545px);top:calc(-81px + 137px)" width="8.5" height="4" viewBox="0 0 8.5 4"><rect x="0.4" y="0.4" width="7.7" height="5" fill="#e0e0e0" stroke="#8a8a8a" stroke-width="0.7"/><rect x="1.5" y="2" width="2" height="2" fill="#e06060"/><rect x="4.5" y="2" width="2" height="2" fill="#60c0a0"/></svg><svg class="a" style="left:calc(-541px + 559px);top:calc(-81px + 137.5px)" width="8.5" height="3.5" viewBox="0 0 8.5 3.5"><rect x="0.4" y="0.4" width="7.7" height="5" rx="1" fill="#d8e8d0" stroke="#58a058" stroke-width="0.8"/></svg><svg class="a" style="left:calc(-541px + 573px);top:calc(-81px + 138px)" width="8.5" height="3" viewBox="0 0 8.5 3"><rect x="0" y="0.5" width="8.5" height="2.5" fill="#10106a"/></svg><svg class="a" style="left:calc(-541px + 587px);top:calc(-81px + 137.5px)" width="8.5" height="3.5" viewBox="0 0 8.5 3.5"><rect x="0.4" y="0.4" width="7.7" height="5" rx="1" fill="#e8d8c0" stroke="#c89860" stroke-width="0.8"/></svg></div>
<div class="a" style="left:540px;top:144px;width:129px;height:11px;border:1px solid #b9c3cf;border-top-color:#c9d0d8;border-bottom:none;background:linear-gradient(#ffffff,#f3f2ed 55%,#e7e5dc)"></div><div class="a" style="left:542.5px;top:147px;width:1px;height:6px;background:repeating-linear-gradient(#8a8a8a 0 1px,transparent 1px 2px)"></div><div class="t" style="left:544.5px;top:147px;font-size:6.8px;font-weight:bold;color:#000;">Inspector</div><svg class="a" style="left:653.5px;top:147px" width="5" height="6" viewBox="0 0 5 6"><path d="M0.7 0.8 V5.2" stroke="#303030" stroke-width="1.1"/><path d="M1.5 0.8 L4.3 3 L1.5 5.2 Z" fill="#202020"/></svg><svg class="a" style="left:661px;top:148px" width="4" height="4" viewBox="0 0 4 4"><path d="M0.3 0.3 L3.7 3.7 M3.7 0.3 L0.3 3.7" stroke="#181818" stroke-width="0.95"/></svg>
<div class="a" style="left:540px;top:155px;width:129px;height:126px;background:#fff;border:1px solid #b2bfcd;box-shadow:inset 0 0 0 1px #f0f4fa"></div>
<svg class="a" style="left:542px;top:158px" width="9" height="8" viewBox="0 0 9 8"><rect x="0.5" y="0.5" width="8" height="7" fill="#e8e8e8" stroke="#404040" stroke-width="0.7"/><rect x="0.5" y="0.5" width="8" height="2" fill="#3040a0"/><rect x="2" y="4" width="5" height="2" fill="#606060"/></svg>
<div class="t" style="left:555px;top:159px;font-size:6.35px;color:#000;">Form ColorSwitch</div>
<svg class="a" style="left:543.5px;top:169.5px" width="6.5" height="6.5" viewBox="0 0 6.5 6.5"><rect x="0.5" y="0.5" width="5.2" height="5.2" rx="1.2" fill="#fbfcfe" stroke="#a4bcd8" stroke-width="0.8"/><path d="M1.4 3.1 H4.8" stroke="#1c1c1c" stroke-width="0.9"/><path d="M1.4 4.1 H4.8" stroke="#c8c8c0" stroke-width="0.6"/><path d="M3.1 1.4 V4.8" stroke="#1c1c1c" stroke-width="0.9"/></svg>
<svg class="a" style="left:553px;top:168px" width="9" height="9" viewBox="0 0 9 9"><rect x="2.5" y="0.5" width="6" height="7" fill="#f0f0f0" stroke="#303050" stroke-width="0.7"/><rect x="0.5" y="2.5" width="6" height="6" fill="#e0e0e8" stroke="#303050" stroke-width="0.7"/><rect x="2" y="4" width="3" height="2" fill="#4050a0"/></svg>
<div class="t" style="left:566.5px;top:169.5px;font-size:6.3px;color:#000;">Other Components</div>
<svg class="a" style="left:543.5px;top:180.0px" width="6.5" height="6.5" viewBox="0 0 6.5 6.5"><rect x="0.5" y="0.5" width="5.2" height="5.2" rx="1.2" fill="#fbfcfe" stroke="#a4bcd8" stroke-width="0.8"/><path d="M1.4 3.1 H4.8" stroke="#1c1c1c" stroke-width="0.9"/><path d="M1.4 4.1 H4.8" stroke="#c8c8c0" stroke-width="0.6"/><path d="M3.1 1.4 V4.8" stroke="#1c1c1c" stroke-width="0.9"/></svg>
<svg class="a" style="left:553px;top:178.5px" width="9" height="9" viewBox="0 0 9 9"><rect x="0.5" y="0.5" width="8" height="8" fill="#e8e8e8" stroke="#404040" stroke-width="0.7"/><rect x="0.5" y="0.5" width="8" height="2" fill="#2030a0"/></svg>
<div class="t" style="left:566.5px;top:180px;font-size:6.3px;color:#000;">[JFrame]</div>
<div class="a" style="left:540px;top:284px;width:129px;height:11px;border:1px solid #b9c3cf;border-top-color:#c9d0d8;border-bottom:none;background:linear-gradient(#ffffff,#f3f2ed 55%,#e7e5dc)"></div><div class="a" style="left:542.5px;top:287px;width:1px;height:6px;background:repeating-linear-gradient(#8a8a8a 0 1px,transparent 1px 2px)"></div><div class="t" style="left:544.5px;top:287px;font-size:6.8px;font-weight:bold;color:#000;">No Properties</div><svg class="a" style="left:653.5px;top:287px" width="5" height="6" viewBox="0 0 5 6"><path d="M0.7 0.8 V5.2" stroke="#303030" stroke-width="1.1"/><path d="M1.5 0.8 L4.3 3 L1.5 5.2 Z" fill="#202020"/></svg><svg class="a" style="left:661px;top:288px" width="4" height="4" viewBox="0 0 4 4"><path d="M0.3 0.3 L3.7 3.7 M3.7 0.3 L0.3 3.7" stroke="#181818" stroke-width="0.95"/></svg>
<div class="a" style="left:540px;top:295px;width:129px;height:215px;background:#fff;border:1px solid #b2bfcd;box-shadow:inset 0 0 0 1px #f0f4fa"></div>
<div class="a" style="left:541px;top:472px;width:127px;height:37px;background:#ece9d8;border-top:1px solid #d2cebe"></div>
<div class="t" style="left:581.8px;top:380.5px;font-size:6.2px;color:#a29e92;">&lt;No Properties&gt;</div>
<svg class="a" style="left:657.3px;top:474.6px" width="9" height="9" viewBox="0 0 9 9"><circle cx="4.5" cy="4.5" r="4.2" fill="#8c8c8c"/><text x="4.5" y="7" font-size="6" text-anchor="middle" fill="#a8a8a8" font-family="Liberation Sans">?</text></svg>
<div class="a" style="left:2px;top:511px;width:670px;height:1px;background:#d9d3c2"></div>
<div class="a" style="left:2px;top:512px;width:670px;height:1px;background:#f6f3ea"></div>
</body></html>
